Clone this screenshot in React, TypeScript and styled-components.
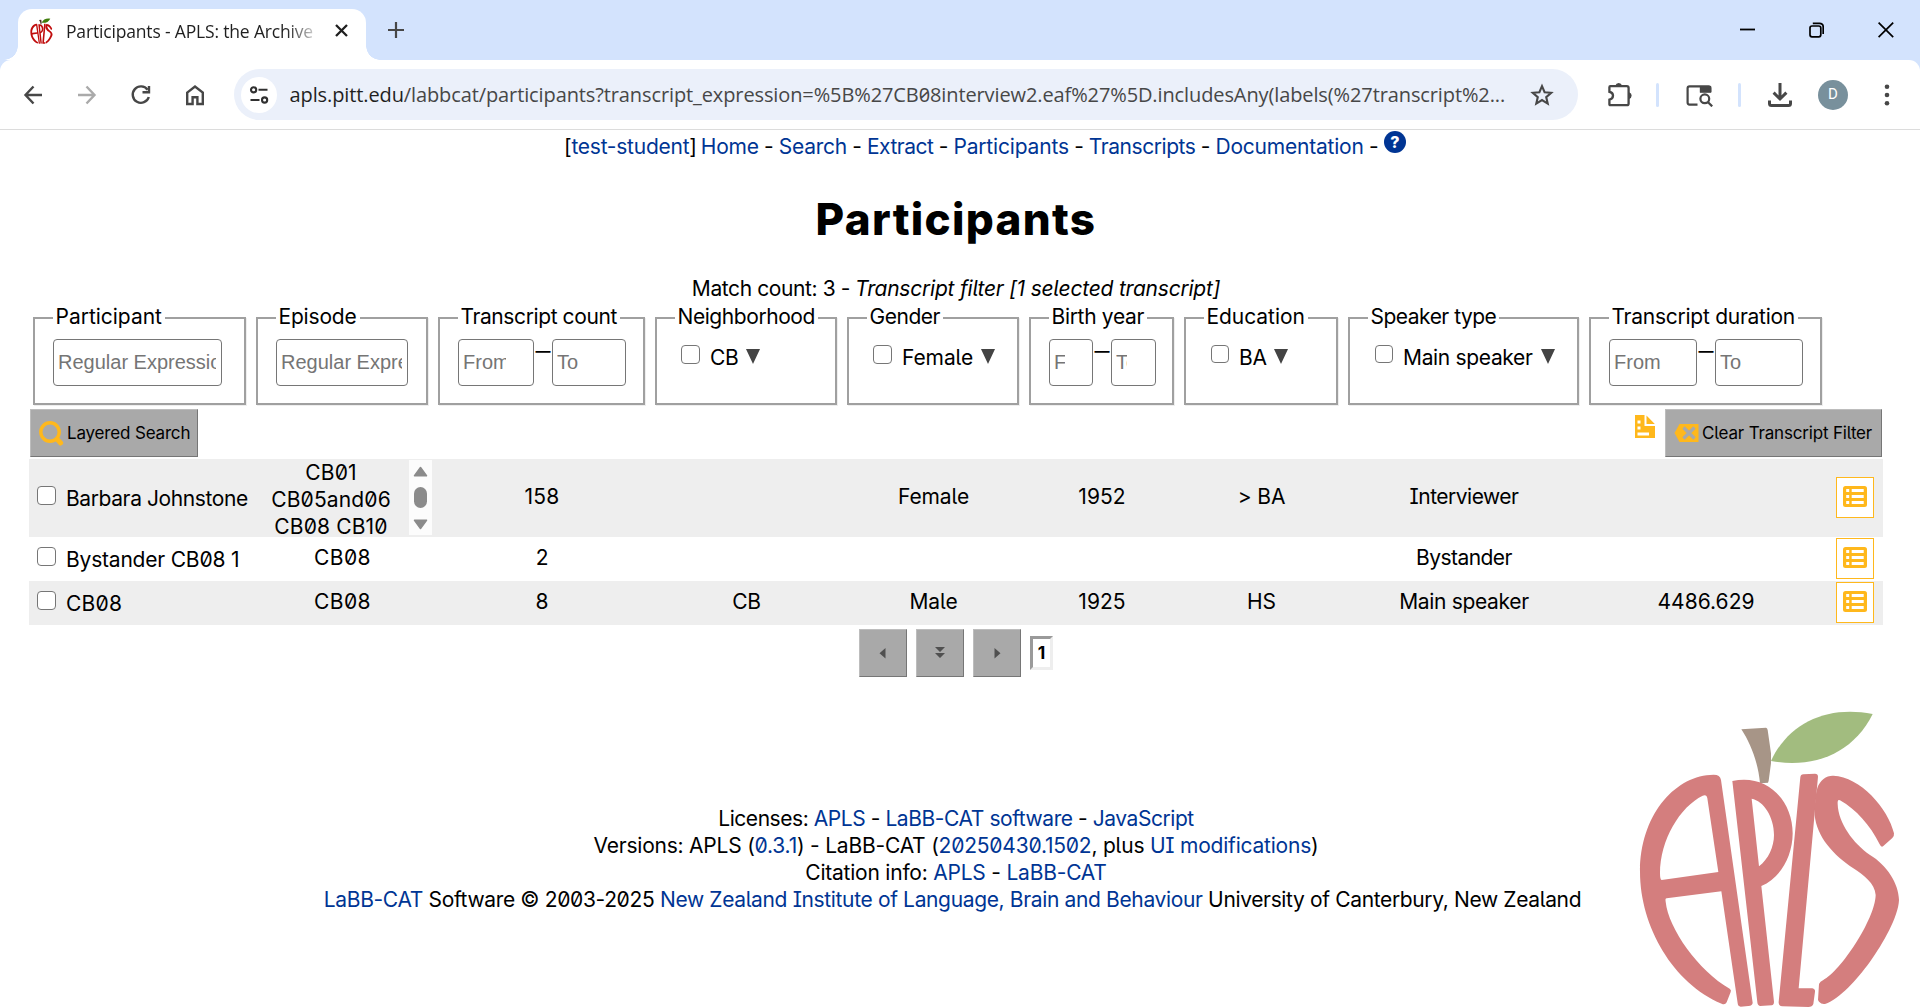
import React from "react";
import styled, { createGlobalStyle } from "styled-components";

const LINK = "#003594";
const GOLD = "#ffb81c";
const ICON = "#474747";

const GlobalStyle = createGlobalStyle`
  * { box-sizing: border-box; }
  html, body { margin: 0; padding: 0; background: #fff; overflow: hidden; }
  body {
    font-family: Inter, "Liberation Sans", sans-serif;
    font-feature-settings: "zero", "cv05", "cv08";
    font-size: 21px;
    line-height: 27px;
    letter-spacing: -0.25px;
    color: #000;
  }
`;

/* ---------- browser frame ---------- */

const Window = styled.div`
  position: relative;
  display: flex;
  flex-direction: column;
  width: 1920px;
  height: 1008px;
  overflow: hidden;
  background: #fff;
`;

const TabStrip = styled.header`
  display: flex;
  align-items: flex-end;
  height: 60px;
  flex: none;
  background: #d3e3fd;
`;

const Tab = styled.div`
  position: relative;
  display: flex;
  align-items: center;
  width: 348px;
  height: 51px;
  margin-left: 18px;
  padding: 0 18px 8px 12px;
  background: #fff;
  border-radius: 14px 14px 0 0;

  &::before,
  &::after {
    content: "";
    position: absolute;
    bottom: 0;
    width: 14px;
    height: 14px;
  }
  &::before {
    left: -14px;
    background: radial-gradient(circle at 0 0, transparent 13.5px, #fff 14px);
  }
  &::after {
    right: -14px;
    background: radial-gradient(circle at 100% 0, transparent 13.5px, #fff 14px);
  }
`;

const TabTitle = styled.div`
  flex: 1;
  margin: 2px 12px 0 13px;
  overflow: hidden;
  white-space: nowrap;
  font-family: "Open Sans", "Noto Sans", sans-serif;
  font-size: 17.5px;
  letter-spacing: -0.17px;
  color: #1f1f1f;
  mask-image: linear-gradient(90deg, #000 220px, transparent 256px);
`;

const NewTab = styled.div`
  display: flex;
  align-items: center;
  height: 60px;
  margin-left: 22px;
`;

const WindowButtons = styled.div`
  display: flex;
  align-items: center;
  gap: 54px;
  height: 59px;
  margin: 0 0 auto auto;
  padding-right: 26px;
`;

const ToolbarFrame = styled.div`
  flex: none;
  height: 70px;
  background: #d3e3fd;
`;

const Toolbar = styled.div`
  display: flex;
  align-items: center;
  height: 70px;
  background: #fff;
  border-bottom: 1px solid #dcdcdc;
  border-radius: 11px 11px 0 0;
`;

const NavButtons = styled.div`
  display: flex;
  align-items: center;
  gap: 30px;
  width: 234px;
  padding-left: 21px;
`;

const Omnibox = styled.div`
  display: flex;
  align-items: center;
  width: 1344px;
  height: 51px;
  padding: 0 24px 0 7px;
  border-radius: 26px;
  background: #ebf0fa;

  & > svg { margin-left: auto; }
`;

const SiteInfo = styled.div`
  display: flex;
  align-items: center;
  justify-content: center;
  width: 36px;
  height: 36px;
  border-radius: 50%;
  background: #fff;
`;

const Url = styled.div`
  width: 1228px;
  margin-left: 12.5px;
  white-space: nowrap;
  overflow: hidden;
  font-family: "Open Sans", "Noto Sans", sans-serif;
  font-size: 20px;
  letter-spacing: -0.109px;
  color: #474747;

  span { color: #1f1f1f; }
`;

const ToolbarRight = styled.div`
  display: flex;
  align-items: center;
  margin-left: 29px;
`;

const Divider = styled.div<{ $ml: number }>`
  width: 3px;
  height: 24px;
  margin: 0 27px 0 ${(p) => p.$ml}px;
  border-radius: 2px;
  background: #d3e3fd;
`;

const Avatar = styled.div`
  display: flex;
  align-items: center;
  justify-content: center;
  width: 30px;
  height: 30px;
  margin: 0 36px 0 26px;
  border-radius: 50%;
  background: #78909c;
  color: #fff;
  font-family: Roboto, sans-serif;
  font-size: 15px;
  letter-spacing: 0;
`;

/* ---------- page ---------- */

const Page = styled.main`
  display: flex;
  flex-direction: column;
  width: 1854px;
  margin-left: 29px;
`;

const Link = styled.a<{ $ls?: number }>`
  color: ${LINK};
  letter-spacing: ${(p) => p.$ls ?? -0.25}px;
  text-decoration: none;
`;

const Text = styled.span<{ $ls?: number; $ml?: number }>`
  letter-spacing: ${(p) => p.$ls ?? -0.25}px;
  margin-left: ${(p) => p.$ml ?? 0}px;
  white-space: nowrap;
`;

const Menu = styled.nav`
  display: flex;
  margin: 3px 0 0 535px;
  white-space: nowrap;
`;

const Dash = styled.span`
  width: 20px;
  text-align: center;
`;

const Help = styled.div`
  display: flex;
  align-items: center;
  justify-content: center;
  width: 22px;
  height: 22px;
  margin: -2px 0 0 0;
  border-radius: 50%;
  background: ${LINK};
  color: #fff;
  font-size: 16px;
  font-weight: 800;
`;

const Title = styled.h1`
  margin: 33px 0 0;
  text-align: center;
  font-size: 44px;
  font-weight: 800;
  line-height: 52px;
  letter-spacing: 1.3px;
`;

const MatchCount = styled.div`
  display: flex;
  justify-content: center;
  gap: 5px;
  margin-top: 30px;
`;

const Italic = styled.em`
  letter-spacing: -0.22px;
`;

const Filters = styled.section`
  display: flex;
  gap: 10px;
  margin: 2px 0 0 4px;
`;

const FilterBox = styled.fieldset<{ $w: number }>`
  flex: none;
  min-width: 0;
  width: ${(p) => p.$w}px;
  height: 101px;
  margin: 0;
  padding: 8px 0 0 18px;
  border: 2px solid #a0a0a0;
  box-shadow: 1px 1px 0 #eee;
`;

const Legend = styled.legend<{ $ls: number }>`
  padding: 0 3px 2px 2.5px;
  line-height: 25px;
  background: #fff;
  letter-spacing: ${(p) => p.$ls}px;
  white-space: nowrap;
`;

const Controls = styled.div`
  display: flex;
  align-items: flex-start;
`;

const Field = styled.input<{ $w: number; $pr: number }>`
  width: ${(p) => p.$w}px;
  height: 47px;
  padding: 0 ${(p) => p.$pr}px 0 4px;
  border: 1px solid #767676;
  border-radius: 4px;
  background: #fff;
  font-family: "Liberation Sans", Arial, sans-serif;
  font-size: 20px;
  letter-spacing: 0;

  &::placeholder { color: #757575; opacity: 1; }
`;

const RangeDash = styled.span`
  display: flex;
  justify-content: center;
  width: 18px;
  font-size: 30px;
  font-weight: 300;
  line-height: 23px;
  letter-spacing: 0;
`;

const Check = styled.span<{ $size?: number }>`
  flex: none;
  width: ${(p) => p.$size ?? 19}px;
  height: ${(p) => p.$size ?? 19}px;
  border: 1.5px solid #767676;
  border-radius: 4px;
  background: #fff;
`;

const Option = styled.div<{ $size: number }>`
  display: flex;
  align-items: flex-start;
  padding: 5px 0 0 ${(p) => (p.$size === 19 ? 6 : 7)}px;

  ${Check} { margin-top: 0.5px; }
`;

const OptionLabel = styled.span<{ $ls: number; $w: number }>`
  width: ${(p) => p.$w}px;
  margin-left: 10px;
  letter-spacing: ${(p) => p.$ls}px;
  white-space: nowrap;
`;

const Caret = styled.span`
  width: 0;
  height: 0;
  margin-top: 5px;
  border: 7.5px solid transparent;
  border-top: 15px solid #444;
  border-bottom: 0;
`;

const Actions = styled.div`
  display: flex;
  height: 48px;
  margin: 4px 1px 0;
`;

const GreyButton = styled.button<{ $w: number }>`
  display: flex;
  align-items: center;
  justify-content: ${(p) => (p.$w > 60 ? "flex-start" : "center")};
  gap: 3px;
  width: ${(p) => p.$w}px;
  height: 48px;
  padding: 0 0 0 ${(p) => (p.$w > 60 ? 8 : 0)}px;
  border: 1px solid;
  border-color: #bdbdbd #767676 #767676 #bdbdbd;
  background: #a9a9a9;
  font: inherit;
  font-size: 17px;
  font-feature-settings: inherit;
  letter-spacing: -0.17px;
  color: #000;
  white-space: nowrap;
`;

const ActionsRight = styled.div`
  display: flex;
  gap: 10px;
  margin-left: auto;

  & > svg { margin-top: 6px; }
`;

const Table = styled.div`
  margin-top: 2px;
`;

const Row = styled.div<{ $tall?: boolean; $shade?: boolean }>`
  display: grid;
  grid-template-columns: 222px 182px 217px 192px 182px 155px 164px 241px 243px 56px;
  height: ${(p) => (p.$tall ? 78 : 44)}px;
  background: ${(p) => (p.$shade ? "#eee" : "#fff")};
`;

const NameCell = styled.div`
  display: flex;
  align-items: center;
  padding-left: 7.5px;

  ${Check} { margin: 0 10.5px 5px 0; }
  ${Text} { margin-top: 1.5px; }
`;

const Cell = styled.div<{ $ls?: number }>`
  display: flex;
  align-items: center;
  justify-content: center;
  padding: 0 0 3px 1px;
  letter-spacing: ${(p) => p.$ls ?? -0.1}px;
  white-space: nowrap;
`;

const EpisodeList = styled.div`
  display: flex;
  height: 75px;
  margin-top: 1px;
`;

const EpisodeLines = styled.div`
  width: 158px;
  margin-top: -1px;
  padding-left: 2px;
  text-align: center;
  letter-spacing: 0.13px;
`;

const ScrollTrack = styled.div`
  display: flex;
  flex-direction: column;
  align-items: center;
  width: 23px;
  height: 75px;
  padding-top: 6px;
  background: #fcfcfc;
`;

const Thumb = styled.div`
  width: 13px;
  height: 21px;
  margin: 10px 0 11px;
  border-radius: 7px;
  background: #8b8b8b;
`;

const ListButton = styled.div`
  display: flex;
  align-items: center;
  justify-content: center;
  align-self: center;
  width: 38px;
  height: 41px;
  margin: -2px 0 0 9px;
  padding-bottom: 2px;
  border: 1px solid ${GOLD};
  background: #fff;
`;

const Pager = styled.div`
  display: flex;
  align-items: center;
  gap: 9px;
  margin: 4px 0 0 830px;
`;

const PageNumber = styled.div`
  width: 23px;
  height: 34px;
  border: 3px solid;
  border-color: #9a9a9a #eee #eee #9a9a9a;
  text-align: center;
  font-size: 17.5px;
  font-weight: 700;
  line-height: 27px;
  letter-spacing: 0;
`;

const Footer = styled.footer`
  margin-top: 128px;
  text-align: center;
`;

const FooterLine = styled.div<{ $ls: number; $shift?: number }>`
  padding-right: ${(p) => p.$shift ?? 0}px;
  white-space: nowrap;
  letter-spacing: ${(p) => p.$ls}px;
  ${Link} { letter-spacing: inherit; }
`;

const Watermark = styled.div`
  position: absolute;
  right: 0;
  bottom: 0;
  width: 300px;
  height: 308px;
`;

/* ---------- drawings ---------- */

type LogoProps = { w: number; h: number; box: string; red: string; green: string; brown: string };

const AppleLogo = ({ w, h, box, red, green, brown }: LogoProps) => (
  <svg width={w} height={h} viewBox={box} display="block">
    <path fill={brown} d="M364 88 L438 83 Q442 84 443 90 L453 160 L453 190 L446 242 L444 248 L420 250 C415 190 392 130 364 88Z" />
    <path fill={green} d="M453 183 C505 70 620 15 758 42 C700 160 580 207 453 183Z" />
    <g fill={red} fillRule="evenodd">
      <path d="M270 225 Q300 220 303 240 L398 908 Q398 917 385 918 L362 920 Q354 920 353 910 L304 574 L140 595 Q135 595 137 605 C145 685 235 812 329 866 Q335 870 332 876 L320 907 Q315 916 305 911 C160 850 60 680 60 515 C60 350 160 232 270 225Z M248 287 Q260 282 262 295 L295 516 L125 540 Q120 540 120 520 C120 420 180 320 248 287Z" />
      <path d="M337 243 C440 220 518 300 518 400 C518 470 480 535 424 558 L462 905 Q462 915 455 916 L420 918 Q413 917 412 907Z M395 296 C430 302 462 350 462 405 C462 440 445 478 417 499Z" />
      <path d="M541 232 Q542 223 550 223 L585 221 Q594 221 594 230 L536 865 L577 865 Q586 867 585 875 L580 912 Q577 921 565 921 L487 919 Q475 918 476 906Z" />
      <path d="M592 264 C600 240 620 226 640 227 C720 230 805 325 822 400 Q823 410 817 414 L790 438 Q784 444 779 433 C750 375 710 330 660 301 Q652 296 653 312 C655 370 700 430 750 465 C800 495 836 550 837 600 C835 650 790 730 750 785 C710 840 660 895 615 912 Q605 914 597 905 L594 900 L597 852 Q600 845 610 840 C660 815 765 660 767 585 C765 550 730 525 700 505 C640 465 590 410 584 345 Q584 290 592 264Z" />
    </g>
  </svg>
);

const Stroke = ({ w, h, d, color = ICON, sw = 2.4 }: { w: number; h: number; d: string; color?: string; sw?: number }) => (
  <svg width={w} height={h} viewBox={`0 0 ${w} ${h}`} fill="none" stroke={color} strokeWidth={sw}>
    <path d={d} />
  </svg>
);

const ListIcon = () => (
  <svg width="24" height="21" viewBox="0 0 24 21">
    <rect width="24" height="21" rx="2.5" fill={GOLD} />
    <path fill="#fff" d="M3.2 3h3v3h-3zM8.7 3h12v3h-12zM3.2 9h3v3h-3zM8.7 9h12v3h-12zM3.2 15h3v3h-3zM8.7 15h12v3h-12z" />
  </svg>
);

const ListAction = () => (
  <ListButton>
    <ListIcon />
  </ListButton>
);

const ScrollArrow = ({ up }: { up?: boolean }) => (
  <svg width="15" height="11" viewBox="0 0 15 11">
    <path
      d={up ? "M7.5 1.5L13.5 9.8H1.5z" : "M7.5 9.5L13.5 1.2H1.5z"}
      fill="#8b8b8b"
      stroke="#8b8b8b"
      strokeWidth="1.5"
      strokeLinejoin="round"
    />
  </svg>
);

const PagerIcon = ({ d }: { d: string }) => (
  <svg width="12" height="14" viewBox="0 0 12 14">
    <path d={d} fill="#505050" />
  </svg>
);

/* ---------- pieces ---------- */

const Range = ({ w1, w2 }: { w1: number; w2: number }) => (
  <Controls>
    <Field $w={w1} $pr={27} placeholder="From" />
    <RangeDash>–</RangeDash>
    <Field $w={w2} $pr={28} placeholder="To" />
  </Controls>
);

const Choice = ({ label, ls, w, size = 19 }: { label: string; ls: number; w: number; size?: number }) => (
  <Option $size={size}>
    <Check $size={size} />
    <OptionLabel $ls={ls} $w={w}>{label}</OptionLabel>
    <Caret />
  </Option>
);

const BrowserFrame = () => (
  <>
    <TabStrip>
      <Tab>
        <AppleLogo w={23} h={26} box="50 20 800 910" red="#c00d0d" green="#3f7d0c" brown="#4a3020" />
        <TabTitle>Participants - APLS: the Archive</TabTitle>
        <Stroke w={13} h={13} sw={2.3} color="#1f1f1f" d="M1 1L12 12M12 1L1 12" />
      </Tab>
      <NewTab>
        <Stroke w={16} h={16} sw={2.2} d="M8 0V16M0 8H16" />
      </NewTab>
      <WindowButtons>
        <Stroke w={15} h={16} sw={1.8} color="#000" d="M0 7.5H15" />
        <svg width="15" height="16" viewBox="0 0 15 16" fill="none" stroke="#000" strokeWidth="1.7">
          <rect x="1" y="4" width="10.8" height="10.8" rx="2" />
          <path d="M3.8 1.3H10.5Q14.2 1.3 14.2 5V12" />
        </svg>
        <Stroke w={16} h={16} sw={1.7} color="#000" d="M.6 .6L15.2 15.2M15.2 .6L.6 15.2" />
      </WindowButtons>
    </TabStrip>
    <ToolbarFrame>
      <Toolbar>
        <NavButtons>
          <Stroke w={24} h={24} d="M21 12H5M12.5 3.5L4.5 12L12.5 20.5" />
          <Stroke w={24} h={24} color="#aaa" d="M3 12H19M11.5 3.5L19.5 12L11.5 20.5" />
          <svg width="24" height="24" viewBox="0 0 24 24" fill="none" stroke={ICON} strokeWidth="2.4">
            <path d="M18.6 6.8A8.2 8.2 0 1 0 19.8 14" />
            <path d="M20 3V9.3H13.5" />
          </svg>
          <Stroke w={24} h={24} d="M4.2 9.6L12 3.6L19.8 9.6V21H14.4V14.3H9.6V21H4.2Z" />
        </NavButtons>
        <Omnibox>
          <SiteInfo>
            <svg width="20" height="20" viewBox="0 0 20 20" fill="none" stroke="#303030" strokeWidth="2.1">
              <circle cx="4.6" cy="4.8" r="2.6" />
              <path d="M9.5 4.8H18.5M1.5 15H10.5" />
              <circle cx="15.6" cy="15" r="2.6" />
            </svg>
          </SiteInfo>
          <Url>
            <span>apls.pitt.edu</span>/labbcat/participants?transcript_expression=%5B%27CB08interview2.eaf%27%5D.includesAny(labels(%27transcript%2...
          </Url>
          <svg width="24" height="24" viewBox="0 0 24 24" fill="none" stroke={ICON} strokeWidth="2.1">
            <path d="M12 3.2L14.6 9.2L21.2 9.8L16.2 14.1L17.7 20.6L12 17.1L6.3 20.6L7.8 14.1L2.8 9.8L9.4 9.2Z" />
          </svg>
        </Omnibox>
        <ToolbarRight>
          <svg width="26" height="26" viewBox="0 0 26 26">
            <path
              d="M3.4 4.2H19.8Q21.6 4.2 21.6 6V21.4Q21.6 23.2 19.8 23.2H3.4Q2.4 23.2 2.4 22.2V17.6Q6 17 6 13.6Q6 10.4 2.4 9.8V5.2Q2.4 4.2 3.4 4.2Z"
              fill="none"
              stroke={ICON}
              strokeWidth="2.3"
            />
            <path d="M8.4 3.6A3.4 3.4 0 0 1 15 3.6ZM22 10.2A3.5 3.5 0 0 1 22 17Z" fill={ICON} />
          </svg>
          <Divider $ml={23} />
          <svg width="28" height="24" viewBox="0 0 28 24" fill="none" stroke={ICON} strokeWidth="2.2">
            <path d="M11.5 21.6H3.6Q1.6 21.6 1.6 19.6V5.2Q1.6 3.4 3.6 3.4H22.6Q24.4 3.4 24.4 5.2V8.2H15V3.4" />
            <path d="M15 4H24V8.6H15Z" fill={ICON} />
            <circle cx="18.8" cy="15.8" r="4.4" />
            <path d="M21.8 19L26.2 23.4" />
          </svg>
          <Divider $ml={24} />
          <svg width="24" height="26" viewBox="0 0 24 26" fill="none" stroke={ICON} strokeWidth="3">
            <path d="M12 1V16M5.6 10.6L12 17L18.4 10.6" />
            <path d="M1.5 18.5V21.5Q1.5 23.5 3.5 23.5H20.5Q22.5 23.5 22.5 21.5V18.5" />
          </svg>
          <Avatar>D</Avatar>
          <svg width="6" height="24" viewBox="0 0 6 24" fill={ICON}>
            <circle cx="3" cy="3.8" r="2.3" />
            <circle cx="3" cy="12" r="2.3" />
            <circle cx="3" cy="20.2" r="2.3" />
          </svg>
        </ToolbarRight>
      </Toolbar>
    </ToolbarFrame>
  </>
);

export default function App() {
  return (
    <Window>
      <GlobalStyle />
      <BrowserFrame />
      <Page>
        <Menu>
          <Text>[<Link>test-student</Link>]</Text>
          <Text $ml={4}><Link $ls={-0.2}>Home</Link></Text>
          <Dash>-</Dash>
          <Link>Search</Link>
          <Dash>-</Dash>
          <Link $ls={-0.5}>Extract</Link>
          <Dash>-</Dash>
          <Link $ls={-0.17}>Participants</Link>
          <Dash>-</Dash>
          <Link $ls={-0.44}>Transcripts</Link>
          <Dash>-</Dash>
          <Link $ls={-0.21}>Documentation</Link>
          <Dash>-</Dash>
          <Help>?</Help>
        </Menu>
        <Title>Participants</Title>
        <MatchCount>
          <Text $ls={-0.4}>Match count: 3 -</Text>
          <Italic>Transcript filter [1 selected transcript]</Italic>
        </MatchCount>
        <Filters>
          <FilterBox $w={213}>
            <Legend $ls={-0.02}>Participant</Legend>
            <Controls><Field $w={169} $pr={5} placeholder="Regular Expression" /></Controls>
          </FilterBox>
          <FilterBox $w={172}>
            <Legend $ls={-0.18}>Episode</Legend>
            <Controls><Field $w={132} $pr={5} placeholder="Regular Expression" /></Controls>
          </FilterBox>
          <FilterBox $w={207}>
            <Legend $ls={-0.4}>Transcript count</Legend>
            <Range w1={76} w2={74} />
          </FilterBox>
          <FilterBox $w={182}>
            <Legend $ls={-0.43}>Neighborhood</Legend>
            <Choice label="CB" ls={-0.3} w={36} />
          </FilterBox>
          <FilterBox $w={172}>
            <Legend $ls={-0.48}>Gender</Legend>
            <Choice label="Female" ls={-0.1} w={79} />
          </FilterBox>
          <FilterBox $w={145}>
            <Legend $ls={-0.32}>Birth year</Legend>
            <Range w1={44} w2={45} />
          </FilterBox>
          <FilterBox $w={154}>
            <Legend $ls={-0.06}>Education</Legend>
            <Choice label="BA" ls={-0.2} w={35} size={18} />
          </FilterBox>
          <FilterBox $w={231}>
            <Legend $ls={-0.5}>Speaker type</Legend>
            <Choice label="Main speaker" ls={-0.33} w={138} size={18} />
          </FilterBox>
          <FilterBox $w={233}>
            <Legend $ls={-0.26}>Transcript duration</Legend>
            <Range w1={88} w2={88} />
          </FilterBox>
        </Filters>
        <Actions>
          <GreyButton $w={168}>
            <svg width="25" height="25" viewBox="0 0 25 25" fill="none" stroke={GOLD}>
              <circle cx="11" cy="11" r="9.2" strokeWidth="3.4" />
              <path d="M18.3 18.3L21.6 22" strokeWidth="5" strokeLinecap="round" />
            </svg>
            Layered Search
          </GreyButton>
          <ActionsRight>
            <svg width="20" height="23" viewBox="0 0 20 23">
              <path fill={GOLD} d="M0 0H9.5V11H20V23H0ZM11.5 0.5L19.8 9H11.5Z" />
              <path fill="#fff" d="M2.5 5.5h3v3h-3zM2.5 11.5h3v3h-3zM2.5 17.5h11.5v3h-11.5z" />
            </svg>
            <GreyButton $w={217}>
              <svg width="25" height="18" viewBox="0 0 25 18">
                <path fill={GOLD} d="M0.5 9L5.5 0H24.5V18H5.5Z" />
                <path d="M9.5 3.5L20.5 14.5M20.5 3.5L9.5 14.5" stroke="#a9a9a9" strokeWidth="3.2" />
              </svg>
              Clear Transcript Filter
            </GreyButton>
          </ActionsRight>
        </Actions>
        <Table>
          <Row $tall $shade>
            <NameCell><Check /><Text $ls={-0.4}>Barbara Johnstone</Text></NameCell>
            <EpisodeList>
              <EpisodeLines>CB01<br />CB05and06<br />CB08 CB10</EpisodeLines>
              <ScrollTrack>
                <ScrollArrow up />
                <Thumb />
                <ScrollArrow />
              </ScrollTrack>
            </EpisodeList>
            <Cell $ls={0.3}>158</Cell>
            <Cell />
            <Cell>Female</Cell>
            <Cell $ls={0.05}>1952</Cell>
            <Cell>&gt; BA</Cell>
            <Cell $ls={-0.5}>Interviewer</Cell>
            <Cell />
            <ListAction />
          </Row>
          <Row>
            <NameCell><Check /><Text $ls={-0.2}>Bystander CB08 1</Text></NameCell>
            <Cell $ls={0.4}>CB08</Cell>
            <Cell>2</Cell>
            <Cell />
            <Cell />
            <Cell />
            <Cell />
            <Cell $ls={-0.55}>Bystander</Cell>
            <Cell />
            <ListAction />
          </Row>
          <Row $shade>
            <NameCell><Check /><Text $ls={0.2}>CB08</Text></NameCell>
            <Cell $ls={0.4}>CB08</Cell>
            <Cell>8</Cell>
            <Cell $ls={-0.3}>CB</Cell>
            <Cell>Male</Cell>
            <Cell $ls={0.05}>1925</Cell>
            <Cell>HS</Cell>
            <Cell $ls={-0.33}>Main speaker</Cell>
            <Cell $ls={0.03}>4486.629</Cell>
            <ListAction />
          </Row>
        </Table>
        <Pager>
          <GreyButton $w={48}><PagerIcon d="M8.5 2V12.5L2.5 7.2Z" /></GreyButton>
          <GreyButton $w={48}><PagerIcon d="M1 1H11L6 6ZM1 7H11L6 12Z" /></GreyButton>
          <GreyButton $w={48}><PagerIcon d="M3.5 2V12.5L9.5 7.2Z" /></GreyButton>
          <PageNumber>1</PageNumber>
        </Pager>
        <Footer>
          <FooterLine $ls={-0.44}>
            Licenses: <Link>APLS</Link> - <Link>LaBB-CAT software</Link> - <Link>JavaScript</Link>
          </FooterLine>
          <FooterLine $ls={-0.22}>
            Versions: APLS (<Link>0.3.1</Link>) - LaBB-CAT (<Link>20250430.1502</Link>, plus <Link>UI modifications</Link>)
          </FooterLine>
          <FooterLine $ls={-0.22}>
            Citation info: <Link>APLS</Link> - <Link>LaBB-CAT</Link>
          </FooterLine>
          <FooterLine $ls={-0.355} $shift={7}>
            <Link>LaBB-CAT</Link> Software © 2003-2025 <Link>New Zealand Institute of Language, Brain and Behaviour</Link> University of Canterbury, New Zealand
          </FooterLine>
        </Footer>
      </Page>
      <Watermark>
        <AppleLogo w={300} h={308} box="0 0 900 924" red="#d47e7e" green="#a2bc7f" brown="#a79587" />
      </Watermark>
    </Window>
  );
}
